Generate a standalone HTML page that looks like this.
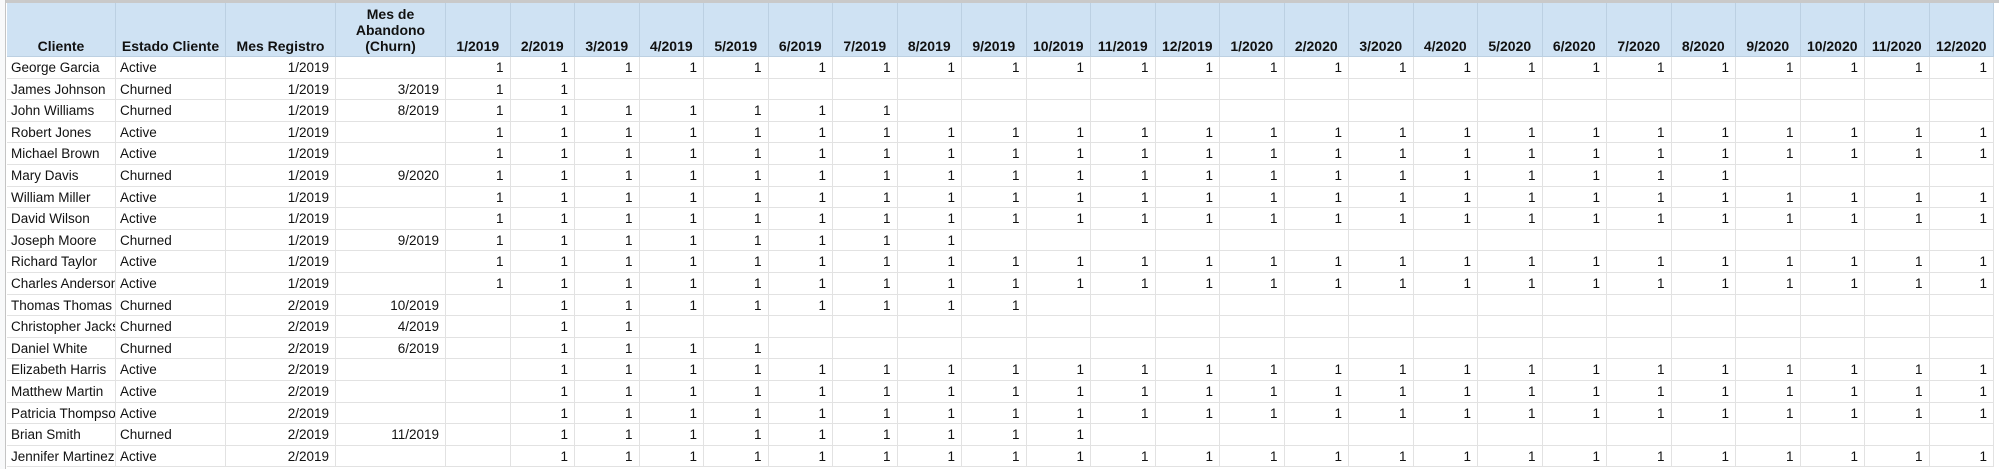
<!DOCTYPE html>
<html><head><meta charset="utf-8">
<style>
*{margin:0;padding:0;box-sizing:border-box}
body{width:1999px;height:469px;overflow:hidden;background:#fff;font-family:"Liberation Sans",Arial,sans-serif;position:relative}
#top{position:absolute;left:0;top:0;width:1999px;height:3px;background:#c9c9c9}
#left{position:absolute;left:0;top:0;width:6px;height:469px;background:#f8f9fa;border-right:1px solid #c4c4c4}
#t{position:absolute;left:7px;top:3px}
.r{display:flex;height:21.6px}
.r i{font-style:normal;display:block;flex:none;width:64.5px;height:100%;border-right:1px solid #e2e2e2;border-bottom:1px solid #e2e2e2;font-size:13.5px;color:#111;text-align:right;padding:3px 6px 0 0;white-space:nowrap;overflow:hidden;line-height:15px}
.r i:nth-child(-n+4){width:110px}
.r i:nth-child(1),.r i:nth-child(2){text-align:left;padding-left:4px}
.r i:nth-child(1){width:109px}
.h{height:54px;background:#cfe2f3}
.h i{border-color:#bcd0e2;font-weight:bold;font-size:14px;text-align:center;padding:0 0 2px 0;display:flex;align-items:flex-end;justify-content:center;line-height:16px;white-space:normal}
.h i:nth-child(1),.h i:nth-child(2){text-align:center;padding-left:0}
</style></head><body>
<div id="top"></div><div id="left"></div>
<div id="t">
<div class="r h"><i>Cliente</i><i>Estado Cliente</i><i>Mes Registro</i><i>Mes de<br>Abandono<br>(Churn)</i><i>1/2019</i><i>2/2019</i><i>3/2019</i><i>4/2019</i><i>5/2019</i><i>6/2019</i><i>7/2019</i><i>8/2019</i><i>9/2019</i><i>10/2019</i><i>11/2019</i><i>12/2019</i><i>1/2020</i><i>2/2020</i><i>3/2020</i><i>4/2020</i><i>5/2020</i><i>6/2020</i><i>7/2020</i><i>8/2020</i><i>9/2020</i><i>10/2020</i><i>11/2020</i><i>12/2020</i></div>
<div class="r"><i>George Garcia</i><i>Active</i><i>1/2019</i><i></i><i>1</i><i>1</i><i>1</i><i>1</i><i>1</i><i>1</i><i>1</i><i>1</i><i>1</i><i>1</i><i>1</i><i>1</i><i>1</i><i>1</i><i>1</i><i>1</i><i>1</i><i>1</i><i>1</i><i>1</i><i>1</i><i>1</i><i>1</i><i>1</i></div>
<div class="r"><i>James Johnson</i><i>Churned</i><i>1/2019</i><i>3/2019</i><i>1</i><i>1</i><i></i><i></i><i></i><i></i><i></i><i></i><i></i><i></i><i></i><i></i><i></i><i></i><i></i><i></i><i></i><i></i><i></i><i></i><i></i><i></i><i></i><i></i></div>
<div class="r"><i>John Williams</i><i>Churned</i><i>1/2019</i><i>8/2019</i><i>1</i><i>1</i><i>1</i><i>1</i><i>1</i><i>1</i><i>1</i><i></i><i></i><i></i><i></i><i></i><i></i><i></i><i></i><i></i><i></i><i></i><i></i><i></i><i></i><i></i><i></i><i></i></div>
<div class="r"><i>Robert Jones</i><i>Active</i><i>1/2019</i><i></i><i>1</i><i>1</i><i>1</i><i>1</i><i>1</i><i>1</i><i>1</i><i>1</i><i>1</i><i>1</i><i>1</i><i>1</i><i>1</i><i>1</i><i>1</i><i>1</i><i>1</i><i>1</i><i>1</i><i>1</i><i>1</i><i>1</i><i>1</i><i>1</i></div>
<div class="r"><i>Michael Brown</i><i>Active</i><i>1/2019</i><i></i><i>1</i><i>1</i><i>1</i><i>1</i><i>1</i><i>1</i><i>1</i><i>1</i><i>1</i><i>1</i><i>1</i><i>1</i><i>1</i><i>1</i><i>1</i><i>1</i><i>1</i><i>1</i><i>1</i><i>1</i><i>1</i><i>1</i><i>1</i><i>1</i></div>
<div class="r"><i>Mary Davis</i><i>Churned</i><i>1/2019</i><i>9/2020</i><i>1</i><i>1</i><i>1</i><i>1</i><i>1</i><i>1</i><i>1</i><i>1</i><i>1</i><i>1</i><i>1</i><i>1</i><i>1</i><i>1</i><i>1</i><i>1</i><i>1</i><i>1</i><i>1</i><i>1</i><i></i><i></i><i></i><i></i></div>
<div class="r"><i>William Miller</i><i>Active</i><i>1/2019</i><i></i><i>1</i><i>1</i><i>1</i><i>1</i><i>1</i><i>1</i><i>1</i><i>1</i><i>1</i><i>1</i><i>1</i><i>1</i><i>1</i><i>1</i><i>1</i><i>1</i><i>1</i><i>1</i><i>1</i><i>1</i><i>1</i><i>1</i><i>1</i><i>1</i></div>
<div class="r"><i>David Wilson</i><i>Active</i><i>1/2019</i><i></i><i>1</i><i>1</i><i>1</i><i>1</i><i>1</i><i>1</i><i>1</i><i>1</i><i>1</i><i>1</i><i>1</i><i>1</i><i>1</i><i>1</i><i>1</i><i>1</i><i>1</i><i>1</i><i>1</i><i>1</i><i>1</i><i>1</i><i>1</i><i>1</i></div>
<div class="r"><i>Joseph Moore</i><i>Churned</i><i>1/2019</i><i>9/2019</i><i>1</i><i>1</i><i>1</i><i>1</i><i>1</i><i>1</i><i>1</i><i>1</i><i></i><i></i><i></i><i></i><i></i><i></i><i></i><i></i><i></i><i></i><i></i><i></i><i></i><i></i><i></i><i></i></div>
<div class="r"><i>Richard Taylor</i><i>Active</i><i>1/2019</i><i></i><i>1</i><i>1</i><i>1</i><i>1</i><i>1</i><i>1</i><i>1</i><i>1</i><i>1</i><i>1</i><i>1</i><i>1</i><i>1</i><i>1</i><i>1</i><i>1</i><i>1</i><i>1</i><i>1</i><i>1</i><i>1</i><i>1</i><i>1</i><i>1</i></div>
<div class="r"><i>Charles Anderson</i><i>Active</i><i>1/2019</i><i></i><i>1</i><i>1</i><i>1</i><i>1</i><i>1</i><i>1</i><i>1</i><i>1</i><i>1</i><i>1</i><i>1</i><i>1</i><i>1</i><i>1</i><i>1</i><i>1</i><i>1</i><i>1</i><i>1</i><i>1</i><i>1</i><i>1</i><i>1</i><i>1</i></div>
<div class="r"><i>Thomas Thomas</i><i>Churned</i><i>2/2019</i><i>10/2019</i><i></i><i>1</i><i>1</i><i>1</i><i>1</i><i>1</i><i>1</i><i>1</i><i>1</i><i></i><i></i><i></i><i></i><i></i><i></i><i></i><i></i><i></i><i></i><i></i><i></i><i></i><i></i><i></i></div>
<div class="r"><i>Christopher Jackson</i><i>Churned</i><i>2/2019</i><i>4/2019</i><i></i><i>1</i><i>1</i><i></i><i></i><i></i><i></i><i></i><i></i><i></i><i></i><i></i><i></i><i></i><i></i><i></i><i></i><i></i><i></i><i></i><i></i><i></i><i></i><i></i></div>
<div class="r"><i>Daniel White</i><i>Churned</i><i>2/2019</i><i>6/2019</i><i></i><i>1</i><i>1</i><i>1</i><i>1</i><i></i><i></i><i></i><i></i><i></i><i></i><i></i><i></i><i></i><i></i><i></i><i></i><i></i><i></i><i></i><i></i><i></i><i></i><i></i></div>
<div class="r"><i>Elizabeth Harris</i><i>Active</i><i>2/2019</i><i></i><i></i><i>1</i><i>1</i><i>1</i><i>1</i><i>1</i><i>1</i><i>1</i><i>1</i><i>1</i><i>1</i><i>1</i><i>1</i><i>1</i><i>1</i><i>1</i><i>1</i><i>1</i><i>1</i><i>1</i><i>1</i><i>1</i><i>1</i><i>1</i></div>
<div class="r"><i>Matthew Martin</i><i>Active</i><i>2/2019</i><i></i><i></i><i>1</i><i>1</i><i>1</i><i>1</i><i>1</i><i>1</i><i>1</i><i>1</i><i>1</i><i>1</i><i>1</i><i>1</i><i>1</i><i>1</i><i>1</i><i>1</i><i>1</i><i>1</i><i>1</i><i>1</i><i>1</i><i>1</i><i>1</i></div>
<div class="r"><i>Patricia Thompson</i><i>Active</i><i>2/2019</i><i></i><i></i><i>1</i><i>1</i><i>1</i><i>1</i><i>1</i><i>1</i><i>1</i><i>1</i><i>1</i><i>1</i><i>1</i><i>1</i><i>1</i><i>1</i><i>1</i><i>1</i><i>1</i><i>1</i><i>1</i><i>1</i><i>1</i><i>1</i><i>1</i></div>
<div class="r"><i>Brian Smith</i><i>Churned</i><i>2/2019</i><i>11/2019</i><i></i><i>1</i><i>1</i><i>1</i><i>1</i><i>1</i><i>1</i><i>1</i><i>1</i><i>1</i><i></i><i></i><i></i><i></i><i></i><i></i><i></i><i></i><i></i><i></i><i></i><i></i><i></i><i></i></div>
<div class="r"><i>Jennifer Martinez</i><i>Active</i><i>2/2019</i><i></i><i></i><i>1</i><i>1</i><i>1</i><i>1</i><i>1</i><i>1</i><i>1</i><i>1</i><i>1</i><i>1</i><i>1</i><i>1</i><i>1</i><i>1</i><i>1</i><i>1</i><i>1</i><i>1</i><i>1</i><i>1</i><i>1</i><i>1</i><i>1</i></div>
</div>
</body></html>
